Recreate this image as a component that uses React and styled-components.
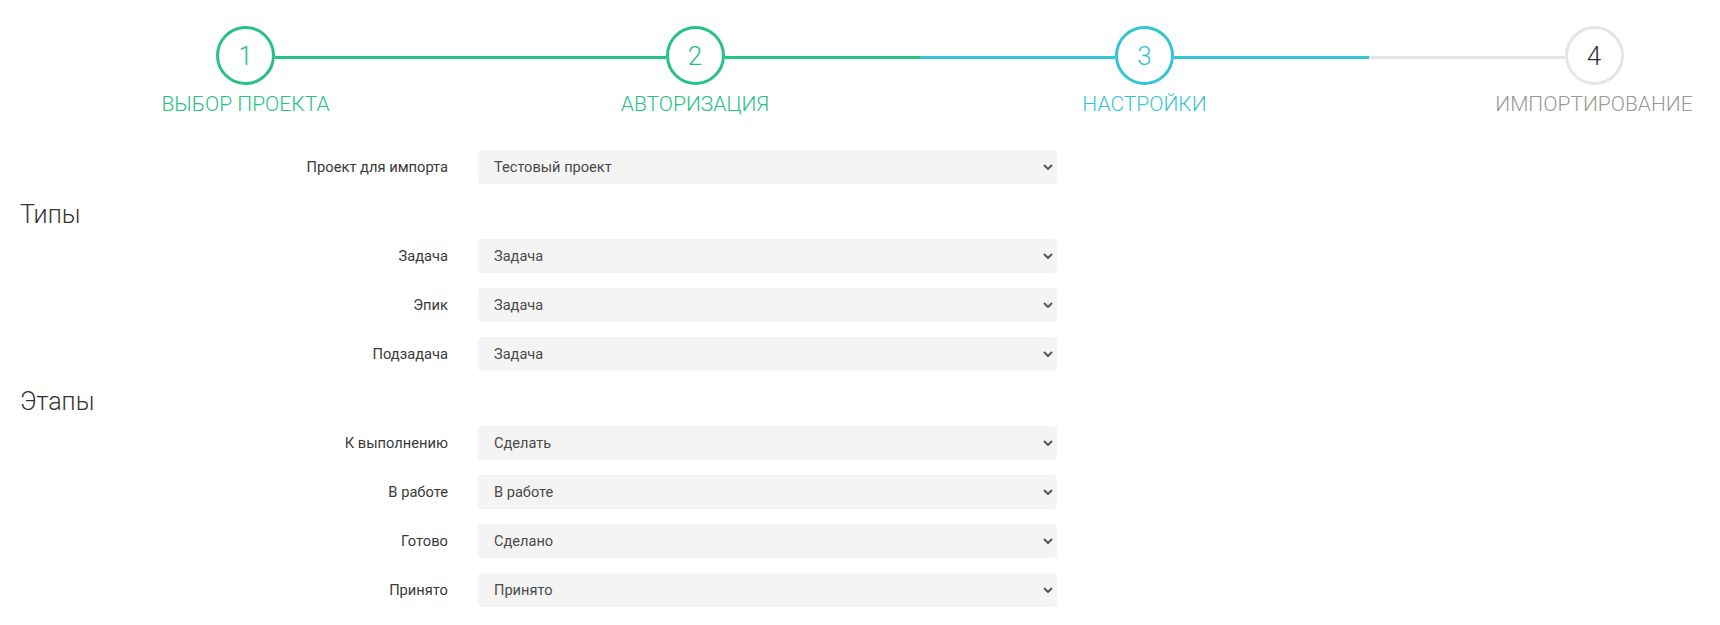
import React from "react";
import styled, { createGlobalStyle } from "styled-components";

const GREEN = "#26c281";
const BLUE = "#32c5d2";
const GREY = "#e5e5e5";

const Global = createGlobalStyle`
  html, body { margin: 0; padding: 0; background: #fff; }
  * { box-sizing: border-box; }
`;

const Page = styled.div`
  font-family: Roboto, "Liberation Sans", Arial, sans-serif;
  padding: 26px 20px 0;
  color: #333;
`;

const Stepper = styled.div`
  display: flex;
  align-items: flex-start;
  padding-left: 196px;
`;

const Step = styled.div`
  flex: none;
  width: 59px;
  display: flex;
  flex-direction: column;
  align-items: center;
`;

const Circle = styled.div`
  width: 59px;
  height: 59px;
  border-radius: 50%;
  border: 3px solid ${(p) => p.$ring};
  color: ${(p) => p.$digit};
  background: #fff;
  display: flex;
  align-items: center;
  justify-content: center;
  font-size: 26px;
  font-weight: 300;
`;

const StepLabel = styled.div`
  margin-top: 7px;
  white-space: nowrap;
  font-size: 21px;
  line-height: 24px;
  font-weight: 300;
  color: ${(p) => p.$color};
`;

const Connector = styled.div`
  flex: 0 0 390.5px;
  height: 3px;
  margin-top: 30px;
  background: linear-gradient(to right, ${(p) => p.$from} 50%, ${(p) => p.$to} 50%);
`;

const Form = styled.div`
  margin-top: 34px;
`;

const Row = styled.div`
  display: grid;
  grid-template-columns: 428px 579px;
  column-gap: 30px;
  align-items: center;
  margin-bottom: 15px;
`;

const Label = styled.label`
  text-align: right;
  font-size: 14.7px;
  color: #3a3a3a;
`;

const SelectWrap = styled.div`
  position: relative;
`;

const Select = styled.select`
  appearance: none;
  -webkit-appearance: none;
  width: 100%;
  height: 34px;
  border: none;
  border-radius: 4px;
  background: #f4f4f4;
  padding: 0 30px 0 16px;
  font-family: Roboto, "Liberation Sans", Arial, sans-serif;
  font-size: 14.6px;
  color: #4a4a4a;
  outline: none;
`;

const Chevron = styled.svg`
  position: absolute;
  right: 4px;
  top: 50%;
  margin-top: -3px;
  width: 10px;
  height: 6px;
  pointer-events: none;
`;

const SectionTitle = styled.h3`
  margin: 2px 0 8px;
  font-size: 25px;
  line-height: 32px;
  font-weight: 300;
  color: #333;
`;

const steps = [
  { n: 1, label: "ВЫБОР ПРОЕКТА", ring: GREEN, digit: GREEN, text: GREEN },
  { n: 2, label: "АВТОРИЗАЦИЯ", ring: GREEN, digit: GREEN, text: GREEN },
  { n: 3, label: "НАСТРОЙКИ", ring: BLUE, digit: BLUE, text: BLUE },
  { n: 4, label: "ИМПОРТИРОВАНИЕ", ring: GREY, digit: "#333", text: "#999" },
];

const connectors = [
  [GREEN, GREEN],
  [GREEN, BLUE],
  [BLUE, GREY],
];

function Field({ label, value }) {
  return (
    <Row>
      <Label>{label}</Label>
      <SelectWrap>
        <Select defaultValue={value}>
          <option>{value}</option>
        </Select>
        <Chevron viewBox="0 0 10 6">
          <path d="M1 1 L5 5 L9 1" fill="none" stroke="#555" strokeWidth="2" />
        </Chevron>
      </SelectWrap>
    </Row>
  );
}

export default function App() {
  return (
    <Page>
      <Global />
      <Stepper>
        {steps.map((s, i) => (
          <React.Fragment key={s.n}>
            <Step>
              <Circle $ring={s.ring} $digit={s.digit}>{s.n}</Circle>
              <StepLabel $color={s.text}>{s.label}</StepLabel>
            </Step>
            {i < connectors.length && (
              <Connector $from={connectors[i][0]} $to={connectors[i][1]} />
            )}
          </React.Fragment>
        ))}
      </Stepper>
      <Form>
        <Field label="Проект для импорта" value="Тестовый проект" />
        <SectionTitle>Типы</SectionTitle>
        <Field label="Задача" value="Задача" />
        <Field label="Эпик" value="Задача" />
        <Field label="Подзадача" value="Задача" />
        <SectionTitle>Этапы</SectionTitle>
        <Field label="К выполнению" value="Сделать" />
        <Field label="В работе" value="В работе" />
        <Field label="Готово" value="Сделано" />
        <Field label="Принято" value="Принято" />
      </Form>
    </Page>
  );
}
